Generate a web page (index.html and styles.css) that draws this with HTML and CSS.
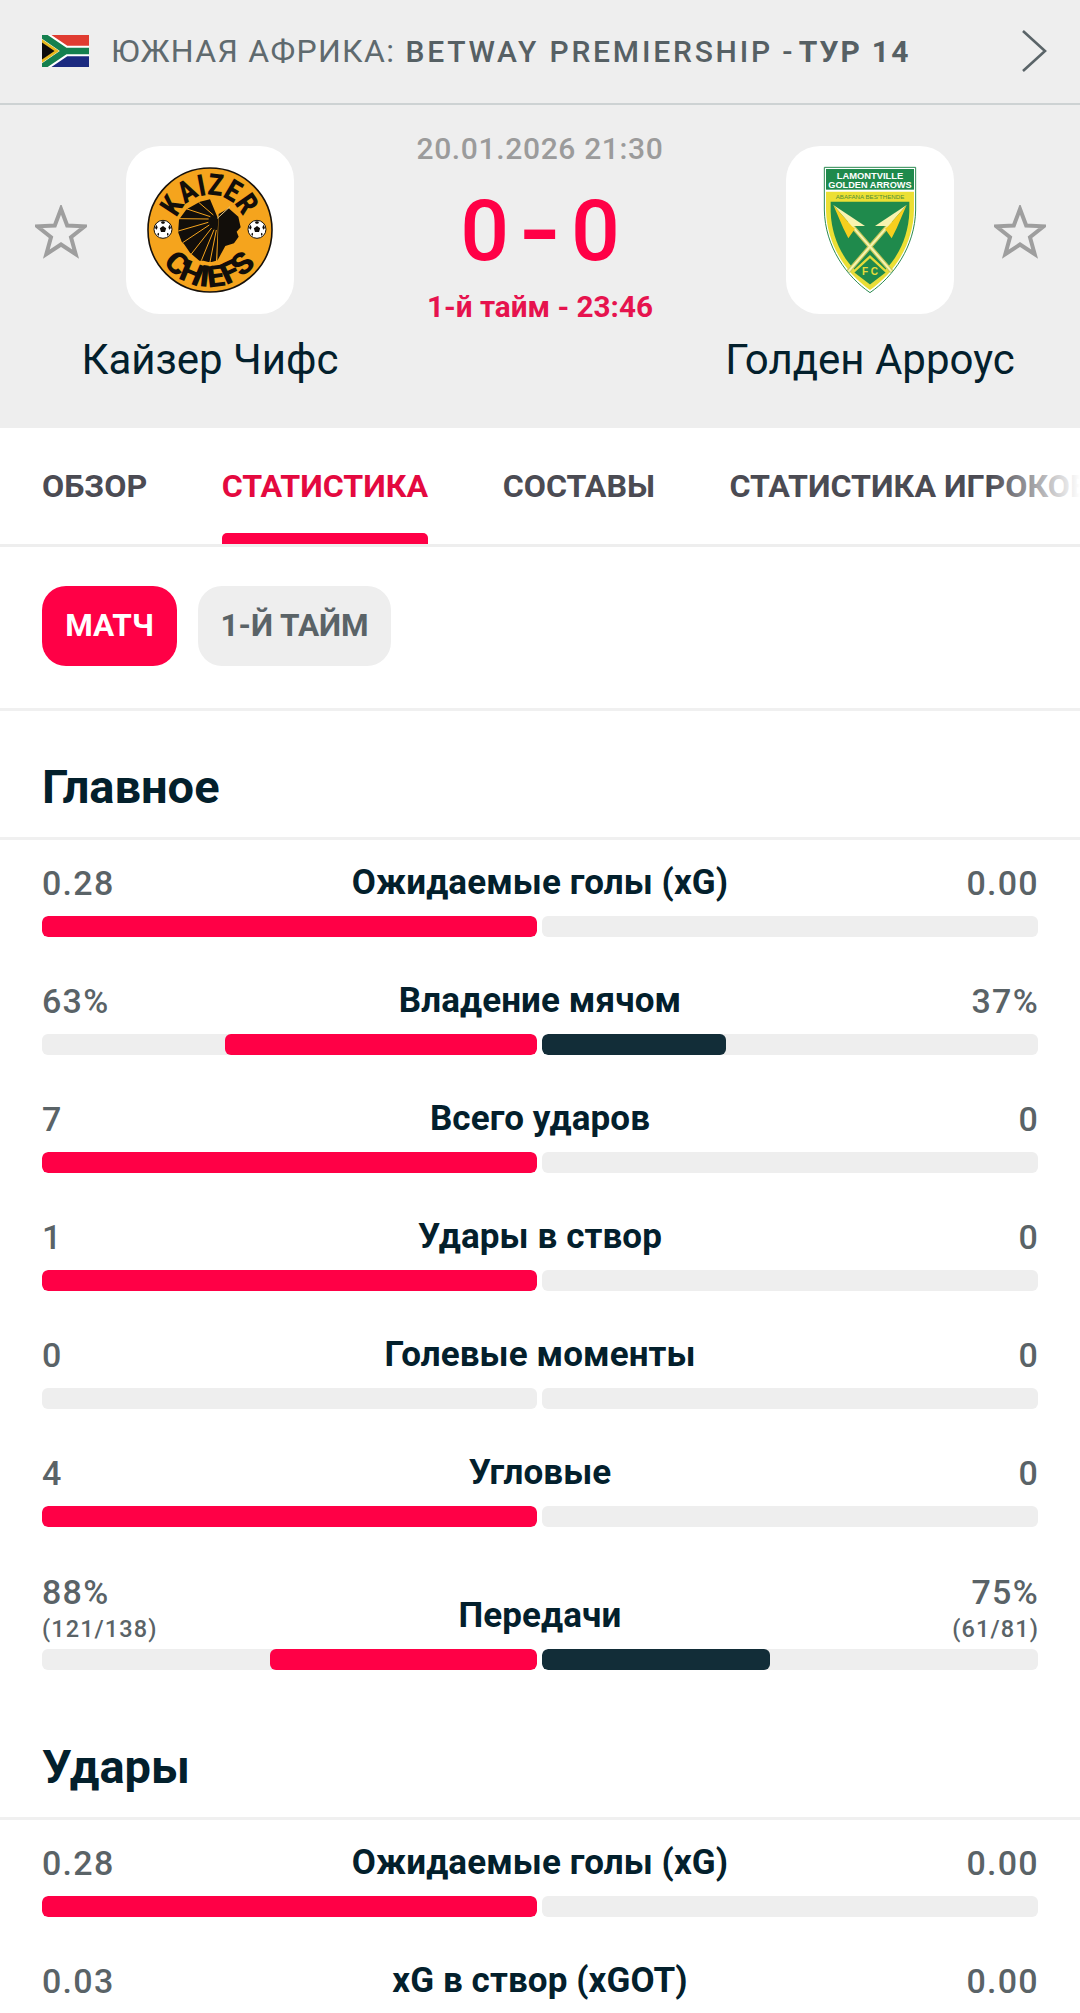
FILE: index.html
```html
<!DOCTYPE html>
<html lang="ru">
<head>
<meta charset="utf-8">
<title>Кайзер Чифс — Голден Арроус</title>
<link rel="stylesheet" href="styles.css">
</head>
<body>
<div class="page">
  <header class="league">
    <svg class="flag" viewBox="0 0 90 60" preserveAspectRatio="none">
      <rect width="90" height="30" fill="#e03c31"/>
      <rect y="30" width="90" height="30" fill="#1b2a80"/>
      <path d="M0 0L45 30H90M0 60L45 30" fill="none" stroke="#fff" stroke-width="20"/>
      <path d="M0 0L45 30H90M0 60L45 30" fill="none" stroke="#14804f" stroke-width="12"/>
      <path d="M0 8L33 30L0 52Z" fill="#e6b81e"/>
      <path d="M0 14L24 30L0 46Z" fill="#0c0c0c"/>
    </svg>
    <div class="league-name">ЮЖНАЯ АФРИКА: <b class="comp">BETWAY PREMIERSHIP</b> <b class="tight">-</b> <b class="tour">ТУР 14</b></div>
    <svg class="chevron" viewBox="0 0 26 44"><path d="M2 2L24 22L2 42" fill="none" stroke="#5a6468" stroke-width="2.6"/></svg>
  </header>

  <section class="match">
    <svg class="star" viewBox="0 0 52 54"><path d="M26 4L32.2 20.5L49.8 21.3L36 32.2L40.7 49.2L26 39.5L11.3 49.2L16 32.2L2.2 21.3L19.8 20.5Z" fill="none" stroke="#9e9e9e" stroke-width="4"/></svg>
    <div class="logo">
      <svg viewBox="0 0 168 168" class="crest">
        <circle cx="84" cy="84" r="62" fill="#f5a41d" stroke="#17110a" stroke-width="1.6"/>
        <defs>
          <path id="arcTop" d="M51.1 72A35 35 0 0 1 116.9 72"/>
          <path id="arcBot" d="M37.3 116.7A57 57 0 0 0 130.7 116.7"/>
        </defs>
        <text class="kc-text"><textPath href="#arcTop" textLength="84" lengthAdjust="spacingAndGlyphs">KAIZER</textPath></text>
        <text class="kc-text"><textPath href="#arcBot" textLength="108" lengthAdjust="spacingAndGlyphs">CHIEFS</textPath></text>
        <g transform="scale(.3333) translate(-48 -18)" fill="#120e0a">
          <path d="M325 238L300 178L270 185L262 190L235 205L228 210L212 232L207 240L205 268L205 278L215 305L222 312L240 338L248 345L268 362L280 362L295 366L305 366L318 362Z"/>
          <path d="M310 225L266 187M301 230L231 207M296 237L209 236M295 247L205 273M298 255L218 308M305 264L244 342M312 269L274 362M319 270L300 366" stroke="#f5a41d" stroke-width="3" fill="none"/>
          <path d="M326 222L356 205L385 230L392 262L380 275L386 290L372 310L346 318L322 362Z"/>
          <path d="M360 200L322 235" stroke="#e8c98a" stroke-width="3" fill="none"/>
          <g transform="translate(159 268)">
            <circle r="27" fill="#fff" stroke="#120e0a" stroke-width="3"/>
            <path d="M0-10L9.5-3L6 8H-6L-9.5-3Z"/>
            <path d="M-4-24L4-24L6-19L0-16L-6-19ZM20-14L24-4L19 1L16-6ZM-20-14L-24-4L-19 1L-16-6ZM12 20L18 14L12 10ZM-12 20L-18 14L-12 10Z"/>
          </g>
          <g transform="translate(441 268)">
            <circle r="27" fill="#fff" stroke="#120e0a" stroke-width="3"/>
            <path d="M0-10L9.5-3L6 8H-6L-9.5-3Z"/>
            <path d="M-4-24L4-24L6-19L0-16L-6-19ZM20-14L24-4L19 1L16-6ZM-20-14L-24-4L-19 1L-16-6ZM12 20L18 14L12 10ZM-12 20L-18 14L-12 10Z"/>
          </g>
        </g>
      </svg>
    </div>
    <div class="center">
      <div class="date">20.01.2026 21:30</div>
      <div class="score"><span>0</span><span class="dash">-</span><span>0</span></div>
      <div class="status">1-й тайм - 23:46</div>
    </div>
    <div class="logo">
      <svg viewBox="0 0 168 168" class="crest">
        <g transform="scale(.3333) translate(-18 -18)">
          <path d="M133 82H407V210C405 320 340 410 270 458C200 410 135 320 133 210Z" fill="#fff" stroke="#2a8a50" stroke-width="3"/>
          <rect x="138" y="87" width="264" height="62" fill="#1f8a4c"/>
          <path d="M138 155H402V210C400 320 335 405 270 450C205 405 140 320 138 210Z" fill="#ecdf34"/>
          <path d="M152 185H388V215C385 310 335 385 270 430C205 385 155 310 152 215Z" fill="#1f8a4c"/>
          <path d="M205 245L335 395M335 245L205 395" stroke="#c9c85a" stroke-width="13" fill="none"/>
          <path d="M205 245L335 395M335 245L205 395" stroke="#f6f4b0" stroke-width="6" fill="none"/>
          <path d="M160 195L255 258H215Z" fill="#f8f3b0"/>
          <path d="M160 195L215 258L225 266L205 295L190 265Z" fill="#f6cf1e"/>
          <path d="M380 195L285 258H325Z" fill="#f8f3b0"/>
          <path d="M380 195L325 258L315 266L335 295L350 265Z" fill="#f6cf1e"/>
          <path d="M270 350L322 398L270 438L218 398Z" fill="#1f8a4c" stroke="#e7dc3a" stroke-width="7"/>
          <text class="ga-white" x="270" y="116" text-anchor="middle" textLength="200" lengthAdjust="spacingAndGlyphs">LAMONTVILLE</text>
          <text class="ga-white" x="270" y="144" text-anchor="middle" textLength="250" lengthAdjust="spacingAndGlyphs">GOLDEN ARROWS</text>
          <text class="ga-green" x="270" y="178" text-anchor="middle" textLength="206" lengthAdjust="spacingAndGlyphs">ABAFANA BES'THENDE</text>
          <text class="ga-fc" x="270" y="406" text-anchor="middle">F C</text>
        </g>
      </svg>
    </div>
    <svg class="star last" viewBox="0 0 52 54"><path d="M26 4L32.2 20.5L49.8 21.3L36 32.2L40.7 49.2L26 39.5L11.3 49.2L16 32.2L2.2 21.3L19.8 20.5Z" fill="none" stroke="#9e9e9e" stroke-width="4"/></svg>
    <div class="team-name home-name">Кайзер Чифс</div>
    <div class="team-name away-name">Голден Арроус</div>
  </section>

  <nav class="tabs">
    <a class="tab">ОБЗОР</a>
    <a class="tab active">СТАТИСТИКА</a>
    <a class="tab">СОСТАВЫ</a>
    <a class="tab">СТАТИСТИКА ИГРОКОВ</a>
    <div class="tabs-fade"></div>
  </nav>

  <div class="filters">
    <button class="pill on">МАТЧ</button>
    <button class="pill">1-Й ТАЙМ</button>
  </div>

  <section class="group">
    <h2 class="group-title">Главное</h2>
    <div class="rows">
      <div class="row">
        <div class="head"><div class="val">0.28</div><div class="label">Ожидаемые голы (xG)</div><div class="val right">0.00</div></div>
        <div class="bars"><div class="track left"><i class="fill home" style="width:100%"></i></div><div class="track"></div></div>
      </div>
      <div class="row">
        <div class="head"><div class="val">63%</div><div class="label">Владение мячом</div><div class="val right">37%</div></div>
        <div class="bars"><div class="track left"><i class="fill home" style="width:63%"></i></div><div class="track"><i class="fill away" style="width:37%"></i></div></div>
      </div>
      <div class="row">
        <div class="head"><div class="val">7</div><div class="label">Всего ударов</div><div class="val right">0</div></div>
        <div class="bars"><div class="track left"><i class="fill home" style="width:100%"></i></div><div class="track"></div></div>
      </div>
      <div class="row">
        <div class="head"><div class="val">1</div><div class="label">Удары в створ</div><div class="val right">0</div></div>
        <div class="bars"><div class="track left"><i class="fill home" style="width:100%"></i></div><div class="track"></div></div>
      </div>
      <div class="row">
        <div class="head"><div class="val">0</div><div class="label">Голевые моменты</div><div class="val right">0</div></div>
        <div class="bars"><div class="track left"></div><div class="track"></div></div>
      </div>
      <div class="row">
        <div class="head"><div class="val">4</div><div class="label">Угловые</div><div class="val right">0</div></div>
        <div class="bars"><div class="track left"><i class="fill home" style="width:100%"></i></div><div class="track"></div></div>
      </div>
      <div class="row tall">
        <div class="head"><div class="val">88%<small>(121/138)</small></div><div class="label">Передачи</div><div class="val right">75%<small>(61/81)</small></div></div>
        <div class="bars"><div class="track left"><i class="fill home" style="width:54%"></i></div><div class="track"><i class="fill away" style="width:46%"></i></div></div>
      </div>
    </div>
  </section>

  <section class="group">
    <h2 class="group-title">Удары</h2>
    <div class="rows">
      <div class="row">
        <div class="head"><div class="val">0.28</div><div class="label">Ожидаемые голы (xG)</div><div class="val right">0.00</div></div>
        <div class="bars"><div class="track left"><i class="fill home" style="width:100%"></i></div><div class="track"></div></div>
      </div>
      <div class="row">
        <div class="head"><div class="val">0.03</div><div class="label">xG в створ (xGOT)</div><div class="val right">0.00</div></div>
        <div class="bars"><div class="track left"><i class="fill home" style="width:100%"></i></div><div class="track"></div></div>
      </div>
    </div>
  </section>
</div>
</body>
</html>
```

FILE: styles.css
```css
* { box-sizing: border-box; }
html, body { margin: 0; padding: 0; background: #fff; }
body { font-family: Roboto, "Noto Sans", sans-serif; color: #03202c; }
.page { width: 1080px; height: 2013px; overflow: hidden; background: #fff; }

.league {
  height: 105px;
  background: #eee;
  border-bottom: 2px solid #cdd2d3;
  display: flex;
  align-items: center;
  padding: 0 33px 1px 42px;
}
.flag { width: 47px; height: 32px; flex: none; }
.league-name {
  flex: 1;
  margin-left: 22px;
  font-size: 32px;
  letter-spacing: 1.3px;
  color: #5f6a6e;
  white-space: nowrap;
}
.league-name b { font-weight: 500; font-size: 30px; letter-spacing: 2.8px; color: #566064; }
.league-name b.comp { margin-left: 1px; }
.league-name b.tight { margin: 0; letter-spacing: 0; }
.league-name b.tour { font-weight: 700; letter-spacing: 2.2px; margin-left: -3px; }
.chevron { width: 26px; height: 44px; flex: none; }

.match {
  height: 323px;
  background: #eee;
  padding: 41px 35px 0;
  display: grid;
  grid-template-columns: 52px 168px 1fr 168px 52px;
  grid-template-rows: 168px auto;
  column-gap: 39px;
}
.star { width: 52px; height: 54px; align-self: center; margin-top: 3px; }
.star.last { margin-left: 1px; }
.logo { width: 168px; height: 168px; background: #fff; border-radius: 34px; }
.crest { width: 168px; height: 168px; display: block; }
.kc-text { font-family: Roboto, sans-serif; font-weight: 900; font-size: 30px; fill: #120e0a; }
.ga-white { font-family: "Liberation Sans", sans-serif; font-weight: 700; font-size: 27px; fill: #fff; }
.ga-green { font-family: "Liberation Sans", sans-serif; font-size: 18px; fill: #4f8f36; }
.ga-fc { font-family: "Liberation Sans", sans-serif; font-weight: 700; font-size: 30px; fill: #e7dc3a; }

.center {
  grid-column: 3;
  grid-row: 1 / span 2;
  margin-top: -14px;
  display: flex;
  flex-direction: column;
  align-items: center;
  white-space: nowrap;
}
.date { font-size: 30px; line-height: 34px; font-weight: 500; color: #9b9b9b; letter-spacing: .65px; }
.score {
  display: flex;
  align-items: center;
  justify-content: center;
  gap: 14px;
  height: 96px;
  margin-top: 17px;
  font-size: 86px;
  font-weight: 500;
  color: #ff0046;
  line-height: 96px;
}
.dash { transform: scaleX(1.3); font-weight: 700; }
.status { font-size: 29.7px; line-height: 34px; font-weight: 700; color: #e6134e; margin-top: 11px; }

.team-name {
  grid-row: 2;
  justify-self: center;
  white-space: nowrap;
  font-size: 42px;
  line-height: 48px;
  margin-top: 22px;
  color: #03202c;
}
.home-name { grid-column: 2; }
.away-name { grid-column: 4; }

.tabs {
  position: relative;
  height: 119px;
  border-bottom: 3px solid #eee;
  display: flex;
  gap: 74.5px;
  padding-left: 42px;
  overflow: hidden;
}
.tab {
  flex: none;
  height: 116px;
  padding-top: 38px;
  font-size: 32.2px;
  line-height: 40px;
  font-weight: 700;
  color: #4b4b53;
  white-space: nowrap;
}
.tab.active { color: #e4093f; position: relative; }
.tab.active::after {
  content: "";
  position: absolute;
  left: 0;
  right: 0;
  bottom: 0;
  height: 11px;
  border-radius: 5px 5px 0 0;
  background: #ff0046;
}
.tabs-fade {
  position: absolute;
  top: 0;
  right: 0;
  bottom: 0;
  width: 90px;
  background: linear-gradient(to right, rgba(255,255,255,0), #fff 100%);
}

.filters {
  display: flex;
  gap: 21px;
  padding: 39px 42px 42px;
  border-bottom: 3px solid #f0f0f0;
  margin-bottom: 16px;
}
.pill {
  height: 80px;
  border: 0;
  border-radius: 24px;
  padding: 0 22.5px;
  background: #eee;
  color: #5a6367;
  font-family: inherit;
  font-size: 31.5px;
  font-weight: 700;
  line-height: 80px;
}
.pill:first-child { width: 135px; padding: 0; }
.pill.on { background: #ff0046; color: #fff; }

.group-title {
  margin: 0;
  height: 110px;
  padding: 33px 42px 0;
  font-size: 47px;
  font-weight: 700;
  line-height: 54px;
  color: #03202c;
}
.rows { border-top: 3px solid #f0f0f0; padding: 0 42px; }
.row { margin-bottom: 37px; }
.head {
  display: grid;
  grid-template-columns: 1fr auto 1fr;
  align-items: end;
  min-height: 60px;
  padding-bottom: 14px;
}
.row:first-child .head { min-height: 76px; }
.row.tall .head { min-height: 85px; }
.val { font-size: 34px; line-height: 38px; font-weight: 500; letter-spacing: 1.3px; color: #5a6367; }
.val small { display: block; font-size: 23.5px; line-height: 34px; font-weight: 500; letter-spacing: 1.1px; margin-top: 1px; margin-bottom: -11px; }
.val.right { text-align: right; margin-right: -1px; }
.label { font-size: 35px; line-height: 38px; font-weight: 700; letter-spacing: .1px; color: #03202c; white-space: nowrap; text-align: center; }
.bars { display: flex; gap: 5px; }
.track { flex: 1; height: 21px; background: #eee; border-radius: 6px; display: flex; overflow: hidden; }
.track.left { flex: 0 0 495px; justify-content: flex-end; }
.fill { display: block; height: 21px; border-radius: 6px; }
.fill.home { background: #ff0046; }
.fill.away { background: #122d38; }
```
